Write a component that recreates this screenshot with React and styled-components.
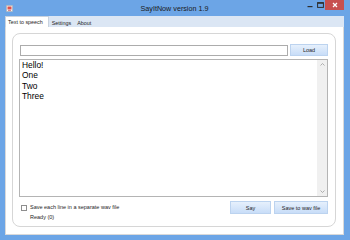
import React from "react";
import styled, { createGlobalStyle } from "styled-components";

const Global = createGlobalStyle`
  html, body { margin: 0; padding: 0; }
  body {
    width: 350px;
    height: 240px;
    overflow: hidden;
    font-family: "Liberation Sans", Arial, sans-serif;
  }
`;

const Window = styled.div`
  width: 350px;
  height: 240px;
  box-sizing: border-box;
  background: #6ca5e6;
  padding: 0 6px 5px 5px;
  display: flex;
  flex-direction: column;
`;

const TitleBar = styled.div`
  height: 16px;
  display: grid;
  grid-template-columns: 1fr auto 1fr;
  align-items: center;
`;

const TitleIcon = styled.div`
  padding-left: 1px;
  display: flex;
  align-items: center;
`;

const Title = styled.div`
  font-size: 7.2px;
  color: #1a1a1a;
  padding-top: 1px;
`;

const Controls = styled.div`
  justify-self: end;
  align-self: start;
  display: flex;
  align-items: flex-start;
  height: 16px;
`;

const Ctrl = styled.div`
  width: ${(p) => p.w}px;
  height: 10px;
  display: flex;
  align-items: center;
  justify-content: center;
  background: ${(p) => (p.close ? "#c75050" : "transparent")};
`;

const TabStrip = styled.div`
  height: 11px;
  background: #dbe6f4;
  display: flex;
  align-items: flex-end;
`;

const Tab = styled.div`
  height: ${(p) => (p.active ? 11 : 10)}px;
  box-sizing: border-box;
  padding: ${(p) => (p.active ? "0 5px 0 2px" : "0 2px")};
  font-size: 5.4px;
  color: #1e1e1e;
  display: flex;
  align-items: center;
  background: ${(p) => (p.active ? "#ffffff" : "transparent")};
  border: 1px solid ${(p) => (p.active ? "#c9d2de" : "transparent")};
  border-bottom: none;
`;

const TabPage = styled.div`
  flex: 1;
  background: #ffffff;
  border: 1px solid #d9d9d9;
  border-top: none;
  padding: 6px 7px 7px 6px;
  display: flex;
`;

const Panel = styled.div`
  flex: 1;
  border: 1px solid #d6d6d6;
  border-radius: 8px;
  padding: 10px 7px 6px 7px;
  display: flex;
  flex-direction: column;
`;

const LoadRow = styled.div`
  height: 12px;
  display: flex;
  align-items: center;
  gap: 2px;
`;

const Input = styled.div`
  flex: 1;
  height: 11px;
  box-sizing: border-box;
  border: 1px solid #acacac;
  background: #fff;
`;

const Button = styled.div`
  width: ${(p) => p.w}px;
  height: ${(p) => p.h}px;
  box-sizing: border-box;
  border: 1px solid #bcd3ef;
  background: linear-gradient(#e6f0fc, #c8ddf8);
  font-size: 5.5px;
  color: #1e1e1e;
  display: flex;
  align-items: center;
  justify-content: center;
`;

const TextBox = styled.div`
  flex: 1;
  margin: 3px 0 0 -1px;
  border: 1px solid #b4b4b4;
  display: flex;
  min-height: 0;
`;

const Lines = styled.div`
  flex: 1;
  padding: 0 2px;
  font-size: 8.4px;
  line-height: 10.4px;
  color: #000;
`;

const ScrollBar = styled.div`
  width: 10px;
  background: #f0f0f0;
  display: flex;
  flex-direction: column;
  justify-content: space-between;
  align-items: center;
  padding: 3px 0;
`;

const Footer = styled.div`
  height: 19px;
  margin-top: 4px;
  display: flex;
  justify-content: space-between;
  align-items: flex-start;
`;

const FooterLeft = styled.div`
  padding-top: 3px;
  display: flex;
  flex-direction: column;
  gap: 2.5px;
`;

const CheckRow = styled.div`
  display: flex;
  align-items: center;
  gap: 3px;
  padding-left: 1px;
`;

const CheckBox = styled.div`
  width: 6px;
  height: 6px;
  box-sizing: border-box;
  border: 1px solid #8e8e8e;
  background: #fff;
`;

const Small = styled.div`
  font-size: 5.5px;
  line-height: 7px;
  color: #1e1e1e;
  padding-left: ${(p) => p.indent || 0}px;
`;

const ButtonGroup = styled.div`
  display: flex;
  gap: 3px;
`;

const Chevron = ({ up }) => (
  <svg width="5" height="3" viewBox="0 0 5 3">
    <path
      d={up ? "M0.5 2.5 L2.5 0.5 L4.5 2.5" : "M0.5 0.5 L2.5 2.5 L4.5 0.5"}
      fill="none"
      stroke="#a6a6a6"
      strokeWidth="0.9"
    />
  </svg>
);

export default function App() {
  return (
    <>
      <Global />
      <Window>
        <TitleBar>
          <TitleIcon>
            <svg width="7" height="7" viewBox="0 0 7 7">
              <rect x="0.5" y="0.5" width="6" height="6" fill="#f4f4f4" stroke="#b0b0b0" strokeWidth="0.6" />
              <rect x="1.5" y="1.5" width="4" height="3" fill="#e0504a" />
              <rect x="2" y="5" width="3" height="1" fill="#d88" />
            </svg>
          </TitleIcon>
          <Title>SayItNow version 1.9</Title>
          <Controls>
            <Ctrl w={11}>
              <svg width="6" height="6" viewBox="0 0 6 6">
                <rect x="0.5" y="4" width="5" height="1.2" fill="#2e2e2e" />
              </svg>
            </Ctrl>
            <Ctrl w={10}>
              <svg width="7" height="6" viewBox="0 0 7 6">
                <rect x="0.6" y="0.6" width="5.8" height="4.8" fill="none" stroke="#2e2e2e" strokeWidth="1" />
                <rect x="0.6" y="0.6" width="5.8" height="1.2" fill="#2e2e2e" />
              </svg>
            </Ctrl>
            <Ctrl w={19} close>
              <svg width="6" height="6" viewBox="0 0 6 6">
                <path d="M1 1 L5 5 M5 1 L1 5" stroke="#fff" strokeWidth="1.2" />
              </svg>
            </Ctrl>
          </Controls>
        </TitleBar>
        <TabStrip>
          <Tab active>Text to speech</Tab>
          <Tab>Settings</Tab>
          <Tab>About</Tab>
        </TabStrip>
        <TabPage>
          <Panel>
            <LoadRow>
              <Input />
              <Button w={38} h={12}>Load</Button>
            </LoadRow>
            <TextBox>
              <Lines>
                <div>Hello!</div>
                <div>One</div>
                <div>Two</div>
                <div>Three</div>
              </Lines>
              <ScrollBar>
                <Chevron up />
                <Chevron />
              </ScrollBar>
            </TextBox>
            <Footer>
              <FooterLeft>
                <CheckRow>
                  <CheckBox />
                  <Small>Save each line in a separate wav file</Small>
                </CheckRow>
                <Small indent={10}>Ready (0)</Small>
              </FooterLeft>
              <ButtonGroup>
                <Button w={41} h={13}>Say</Button>
                <Button w={54} h={13}>Save to wav file</Button>
              </ButtonGroup>
            </Footer>
          </Panel>
        </TabPage>
      </Window>
    </>
  );
}
